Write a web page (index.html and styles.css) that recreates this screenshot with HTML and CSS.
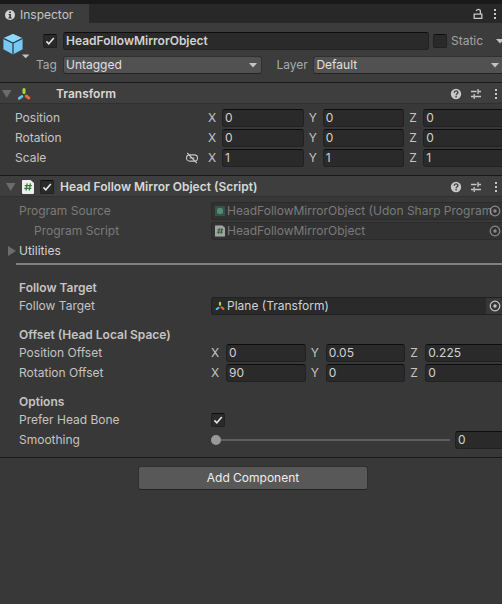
FILE: index.html
```html
<!DOCTYPE html>
<html lang="en">
<head>
<meta charset="utf-8">
<meta name="viewport" content="width=device-width, initial-scale=1">
<title>Inspector</title>
<link rel="stylesheet" href="styles.css">
</head>
<body>
<svg class="defs" width="0" height="0" aria-hidden="true">
  <symbol id="i-help" viewBox="0 0 12 12"><circle cx="6" cy="6" r="5.2" fill="#c8c8c8"/><path d="M4.2 4.7C4.2 2.3 7.9 2.4 7.9 4.5C7.9 5.8 6.1 5.7 6.1 7.2" fill="none" stroke="#3c3c3c" stroke-width="1.3"/><rect x="5.4" y="8" width="1.4" height="1.4" fill="#3c3c3c"/></symbol>
  <symbol id="i-preset" viewBox="0 0 12 12"><path d="M1 3.5H6.5M8 3.5H11M8 1V6M1 8.5H3.5M5 8.5H11M4.2 6V11" fill="none" stroke="#c8c8c8" stroke-width="1.3"/></symbol>
  <symbol id="i-more" viewBox="0 0 4 12"><path d="M1 1h2v2H1zM1 5h2v2H1zM1 9h2v2H1z" fill="#c8c8c8"/></symbol>
  <symbol id="i-axes" viewBox="0 0 14 14"><path d="M7 2.6V5.4" stroke="#a6dc3c" stroke-width="3" stroke-linecap="round"/><path d="M5 9.4L2.2 11.4" stroke="#62c4f0" stroke-width="2.6" stroke-linecap="round"/><path d="M9.2 9L11.8 11" stroke="#ee6640" stroke-width="3" stroke-linecap="round"/></symbol>
  <symbol id="i-script" viewBox="0 0 12 14"><path d="M1 0H8.5L12 3V13Q12 14 11 14H1Q0 14 0 13V1Q0 0 1 0Z" fill="#eeeeee"/><path d="M5.2 3.4L4 10.6M8.4 3.4L7.2 10.6M2.7 5.6H9.8M2.2 8.4H9.3" fill="none" stroke="#2f7a36" stroke-width="1.2"/></symbol>
  <symbol id="i-pick" viewBox="0 0 12 12"><circle cx="6" cy="6" r="4.8" fill="none" stroke="#c4c4c4" stroke-width="1.2"/><circle cx="6" cy="6" r="1.7" fill="#c4c4c4"/></symbol>
</svg>

<main class="inspector">
  <header class="tabbar">
    <div class="tab">
      <svg width="10" height="10" viewBox="0 0 10 10" aria-hidden="true"><circle cx="5" cy="5" r="5" fill="#d2d2d2"/><path d="M4.2 1.6h1.7v1.5H4.2zM3.6 4h2.3v3.3h.7v1.1H3.5V7.3h.8V5.1h-.7z" fill="#333"/></svg>
      <span>Inspector</span>
    </div>
    <div class="tab-tools">
      <button class="icon-btn" aria-label="Lock"><svg width="10" height="12" viewBox="0 0 10 12"><path d="M1.2 6.2H8.8V10.4H1.2ZM7.4 6V3.4Q7.4 1.4 5.4 1.4Q3.8 1.4 3.3 3" fill="none" stroke="#c8c8c8" stroke-width="1.3"/></svg></button>
      <button class="icon-btn" aria-label="Tab menu"><svg width="4" height="12"><use href="#i-more"/></svg></button>
    </div>
  </header>

  <section class="object">
    <button class="icon-btn cube" aria-label="Object icon">
      <svg width="28" height="28" viewBox="0 0 28 28"><path d="M11 2L20.6 6.2V17.2L11 22.6L1.4 17.2V6.2Z" fill="#75c9f2"/><path d="M11 2L20.6 6.2L11 11L1.4 6.2Z" fill="#8bd9fb"/><path d="M1.4 6.4L11 11L20.6 6.4M11 11V22.6" fill="none" stroke="#2c424e" stroke-width="1.3"/><path d="M20 22.5H27.4L23.7 26.2Z" fill="#c4c4c4"/></svg>
    </button>
    <div class="object-fields">
      <div class="name-row">
        <input class="check" type="checkbox" checked aria-label="Active">
        <input class="field name" type="text" value="HeadFollowMirrorObject" aria-label="Name">
        <input class="check" type="checkbox" id="static">
        <label class="static-label" for="static">Static</label>
        <button class="icon-btn static-menu" aria-label="Static flags"><svg width="8" height="5" viewBox="0 0 8 5"><path d="M0 0H8L4 4.5Z" fill="#c4c4c4"/></svg></button>
      </div>
      <div class="tag-row">
        <label class="tag-label" for="tag">Tag</label>
        <select class="select tag" id="tag"><option>Untagged</option></select>
        <label class="layer-label" for="layer">Layer</label>
        <select class="select layer" id="layer"><option>Default</option></select>
      </div>
    </div>
  </section>

  <section class="component">
    <header class="component-head">
      <svg class="fold" width="10" height="8" viewBox="0 0 10 8" aria-hidden="true"><path d="M0 0H9.5L4.7 8Z" fill="#6c6c6c"/></svg>
      <svg class="axes" width="14" height="14" aria-hidden="true"><use href="#i-axes"/></svg>
      <h2 class="transform-title">Transform</h2>
      <div class="tools">
        <button class="icon-btn" aria-label="Help"><svg width="12" height="12"><use href="#i-help"/></svg></button>
        <button class="icon-btn" aria-label="Presets"><svg width="12" height="12"><use href="#i-preset"/></svg></button>
        <button class="icon-btn more" aria-label="Menu"><svg width="4" height="12"><use href="#i-more"/></svg></button>
      </div>
    </header>
    <div class="props transform">
      <div class="row"><span class="label">Position</span>
        <div class="vector">
          <label class="axis"><span>X</span><input class="field" type="text" value="0"></label>
          <label class="axis"><span>Y</span><input class="field" type="text" value="0"></label>
          <label class="axis"><span>Z</span><input class="field" type="text" value="0"></label>
        </div></div>
      <div class="row"><span class="label">Rotation</span>
        <div class="vector">
          <label class="axis"><span>X</span><input class="field" type="text" value="0"></label>
          <label class="axis"><span>Y</span><input class="field" type="text" value="0"></label>
          <label class="axis"><span>Z</span><input class="field" type="text" value="0"></label>
        </div></div>
      <div class="row"><span class="label scale-label">Scale
          <button class="icon-btn" aria-label="Constrain proportions"><svg width="12" height="12" viewBox="0 0 12 12"><path d="M3.6 2.9H8.4A3.1 3.1 0 0 1 8.4 9.1H3.6A3.1 3.1 0 0 1 3.6 2.9M3.6 6H8.4M1.2 1L10.8 11" fill="none" stroke="#c4c4c4" stroke-width="1.1"/></svg></button></span>
        <div class="vector">
          <label class="axis"><span>X</span><input class="field" type="text" value="1"></label>
          <label class="axis"><span>Y</span><input class="field" type="text" value="1"></label>
          <label class="axis"><span>Z</span><input class="field" type="text" value="1"></label>
        </div></div>
    </div>
  </section>

  <section class="component">
    <header class="component-head script-head">
      <svg class="fold" width="10" height="8" viewBox="0 0 10 8" aria-hidden="true"><path d="M0 0H9.5L4.7 8Z" fill="#6c6c6c"/></svg>
      <svg class="script-icon" width="12" height="14" aria-hidden="true"><use href="#i-script"/></svg>
      <input class="check" type="checkbox" id="enabled" checked>
      <h2><label for="enabled">Head Follow Mirror Object (Script)</label></h2>
      <div class="tools">
        <button class="icon-btn" aria-label="Help"><svg width="12" height="12"><use href="#i-help"/></svg></button>
        <button class="icon-btn" aria-label="Presets"><svg width="12" height="12"><use href="#i-preset"/></svg></button>
        <button class="icon-btn more" aria-label="Menu"><svg width="4" height="12"><use href="#i-more"/></svg></button>
      </div>
    </header>
    <div class="props script">
      <div class="row disabled"><span class="label">Program Source</span>
        <div class="object-field">
          <svg width="10" height="10" viewBox="0 0 10 10" aria-hidden="true"><rect width="10" height="10" rx="1" fill="#3d6a56"/><rect x="2" y="2" width="6" height="6" rx="2" fill="#6cc79e"/></svg>
          <span class="object-name">HeadFollowMirrorObject (Udon Sharp Program</span>
          <button class="icon-btn pick" disabled aria-label="Select program source"><svg width="12" height="12"><use href="#i-pick"/></svg></button>
        </div></div>
      <div class="row disabled"><span class="label nested">Program Script</span>
        <div class="object-field">
          <svg width="10" height="12" viewBox="0 0 12 14" aria-hidden="true"><use href="#i-script"/></svg>
          <span class="object-name">HeadFollowMirrorObject</span>
          <button class="icon-btn pick" disabled aria-label="Select program script"><svg width="12" height="12"><use href="#i-pick"/></svg></button>
        </div></div>
      <button class="foldout"><svg width="8" height="10" viewBox="0 0 8 10" aria-hidden="true"><path d="M0 0L8 5L0 10Z" fill="#6c6c6c"/></svg>Utilities</button>
      <hr class="divider">

      <h3>Follow Target</h3>
      <div class="row"><span class="label">Follow Target</span>
        <div class="object-field">
          <svg width="10" height="10" viewBox="0 0 14 14" aria-hidden="true"><use href="#i-axes"/></svg>
          <span class="object-name">Plane (Transform)</span>
          <button class="icon-btn pick" aria-label="Select follow target"><svg width="12" height="12"><use href="#i-pick"/></svg></button>
        </div></div>

      <h3>Offset (Head Local Space)</h3>
      <div class="row"><span class="label">Position Offset</span>
        <div class="vector">
          <label class="axis"><span>X</span><input class="field" type="text" value="0"></label>
          <label class="axis"><span>Y</span><input class="field" type="text" value="0.05"></label>
          <label class="axis"><span>Z</span><input class="field" type="text" value="0.225"></label>
        </div></div>
      <div class="row"><span class="label">Rotation Offset</span>
        <div class="vector">
          <label class="axis"><span>X</span><input class="field" type="text" value="90"></label>
          <label class="axis"><span>Y</span><input class="field" type="text" value="0"></label>
          <label class="axis"><span>Z</span><input class="field" type="text" value="0"></label>
        </div></div>

      <h3>Options</h3>
      <div class="row"><label class="label" for="prefer">Prefer Head Bone</label>
        <input class="check" type="checkbox" id="prefer" checked></div>
      <div class="row"><label class="label" for="smoothing">Smoothing</label>
        <div class="slider-group">
          <input class="slider" type="range" id="smoothing" min="0" max="1" step="0.01" value="0">
          <input class="field slider-value" type="text" value="0" aria-label="Smoothing value">
        </div></div>
    </div>
  </section>

  <footer class="add"><button class="add-btn">Add Component</button></footer>
</main>
</body>
</html>
```

FILE: styles.css
```css
* { box-sizing: border-box; }

body {
  margin: 0;
  min-height: 100vh;
  background: #383838;
  color: #c4c4c4;
  font: 12px/18px Inter, "Liberation Sans", sans-serif;
  overflow-x: hidden;
}

input, select, button { font: inherit; color: inherit; margin: 0; }
h2, h3 { margin: 0; font-size: 12px; line-height: 18px; font-weight: 600; }
svg { display: block; flex: none; }
.defs { position: absolute; }
.inspector { overflow: hidden; }

.icon-btn {
  display: flex;
  align-items: center;
  justify-content: center;
  padding: 0;
  border: 0;
  background: none;
}

/* Tab bar */
.tabbar {
  display: flex;
  justify-content: space-between;
  height: 23px;
  border-top: 4px solid #191919;
  background: #282828;
}
.tab {
  display: flex;
  align-items: center;
  gap: 5px;
  width: 89px;
  padding: 2px 0 0 5px;
  background: #3c3c3c;
}
.tab-tools {
  display: flex;
  align-items: center;
  gap: 10px;
  padding-right: 5px;
}

/* Shared controls */
.field {
  flex: 1;
  width: 100%;
  min-width: 0;
  height: 18px;
  padding: 0 2px;
  border: 1px solid #212121;
  border-top-color: #0d0d0d;
  border-radius: 3px;
  background: #2a2a2a;
  color: #d2d2d2;
}
.check {
  appearance: none;
  flex: none;
  width: 14px;
  height: 14px;
  border: 1px solid #212121;
  border-top-color: #0d0d0d;
  border-radius: 2px;
  background: #2a2a2a;
}
.check:checked {
  background: #2a2a2a url("data:image/svg+xml,%3Csvg xmlns='http://www.w3.org/2000/svg' viewBox='0 0 12 12'%3E%3Cpath d='M2.4 6.4L4.8 8.8L9.8 3' fill='none' stroke='%23e4e4e4' stroke-width='1.6'/%3E%3C/svg%3E") center / 12px 12px no-repeat;
}
.select {
  appearance: none;
  min-width: 0;
  height: 18px;
  padding: 0 20px 0 2px;
  border: 1px solid #303030;
  border-bottom-color: #242424;
  border-radius: 3px;
  background: #515151 url("data:image/svg+xml,%3Csvg xmlns='http://www.w3.org/2000/svg' viewBox='0 0 8 5'%3E%3Cpath d='M0 0H8L4 4.5Z' fill='%23c4c4c4'/%3E%3C/svg%3E") right 4px center / 8px 5px no-repeat;
  color: #e0e0e0;
  line-height: 16px;
}

/* Object header */
.object {
  display: flex;
  gap: 5px;
  padding: 9px 0 8px 2px;
  background: #3c3c3c;
}
.cube { align-self: flex-start; }
.object-fields { flex: 1; min-width: 0; }
.name-row, .tag-row { display: flex; align-items: center; }
.name-row { padding-left: 8px; }
.name { margin: 0 4px 0 6px; font-weight: 600; }
.static-label { width: 49px; padding-left: 4px; color: #a4a4a4; }
.static-menu { margin-right: -2px; }
.tag-row { margin-top: 6px; }
.tag-label { width: 28px; padding-left: 1px; color: #aaa; }
.layer-label { width: 51px; padding-left: 14px; color: #aaa; }
.tag { flex: 20; }
.layer { flex: 19; margin-right: -1px; border-right: 0; border-radius: 3px 0 0 3px; }

/* Components */
.component { border-top: 1px solid #1a1a1a; }
.component-head {
  display: flex;
  align-items: center;
  height: 21px;
  padding: 1px 4px 0 2px;
  border-bottom: 1px solid #303030;
  background: #3e3e3e;
  color: #d8d8d8;
}
.script-head { padding-left: 6px; }
.axes { margin-left: 5px; }
.transform-title { margin-left: 25px; }
.script-icon { margin: 0 6px; }
.script-head h2 { margin-left: 6px; }
.tools { display: flex; align-items: center; gap: 8px; margin-left: auto; }
.more { margin-left: 4px; }

.props { display: flex; flex-direction: column; gap: 2px; }
.transform { padding: 5px 0 8px 15px; }
.script { padding: 5px 0 8px 19px; }
.row { display: flex; align-items: center; height: 18px; }
.label { flex: none; width: 192px; }
.transform .label { width: 193px; }
.nested { padding-left: 15px; }
.scale-label { display: flex; justify-content: space-between; padding-right: 10px; }
.disabled .label, .disabled .object-name { color: #7b7b7b; }

.vector { display: flex; flex: 1; gap: 5px; min-width: 0; margin-right: -3px; }
.axis { display: flex; flex: 1; min-width: 0; }
.axis span { flex: none; width: 14px; }
.script .axis span { width: 15px; }

.object-field {
  display: flex;
  flex: 1;
  align-items: center;
  gap: 2px;
  min-width: 0;
  height: 18px;
  padding-left: 3px;
  border: 1px solid #212121;
  border-right: 0;
  border-radius: 3px 0 0 3px;
  background: #2a2a2a;
}
.object-name {
  flex: 1;
  min-width: 0;
  white-space: nowrap;
  color: #d2d2d2;
}
.pick { width: 16px; height: 16px; background: #373737; padding-left: 2px; }
.disabled .object-field { background: #323232; border-color: #2b2b2b; }
.disabled .object-field svg { opacity: 0.6; }
.disabled .pick { background: none; }

.foldout {
  display: flex;
  align-items: center;
  align-self: flex-start;
  gap: 3px;
  height: 18px;
  margin-left: -11px;
  padding: 0;
  border: 0;
  background: none;
  color: #d2d2d2;
}
.divider {
  width: auto;
  height: 2px;
  margin: 1px 0 3px -3px;
  border: 0;
  background: #808080;
}
.script h3 { margin-top: 9px; margin-bottom: -2px; }

.slider-group { display: flex; flex: 1; align-items: center; gap: 5px; min-width: 0; }
.slider {
  appearance: none;
  flex: 1;
  min-width: 0;
  height: 10px;
  background: linear-gradient(#5e5e5e, #5e5e5e) center / 100% 2px no-repeat;
}
.slider::-webkit-slider-thumb {
  appearance: none;
  width: 10px;
  height: 10px;
  border-radius: 50%;
  background: #999;
}
.slider-value { flex: none; width: 47px; border-right: 0; border-radius: 3px 0 0 3px; }

/* Footer */
.add {
  display: flex;
  justify-content: center;
  padding: 8px 0 8px 4px;
  border-top: 1px solid #1a1a1a;
}
.add-btn {
  width: 46%;
  height: 24px;
  padding: 0;
  border: 1px solid #303030;
  border-bottom-color: #242424;
  border-radius: 3px;
  background: #585858;
  color: #eee;
}
```
